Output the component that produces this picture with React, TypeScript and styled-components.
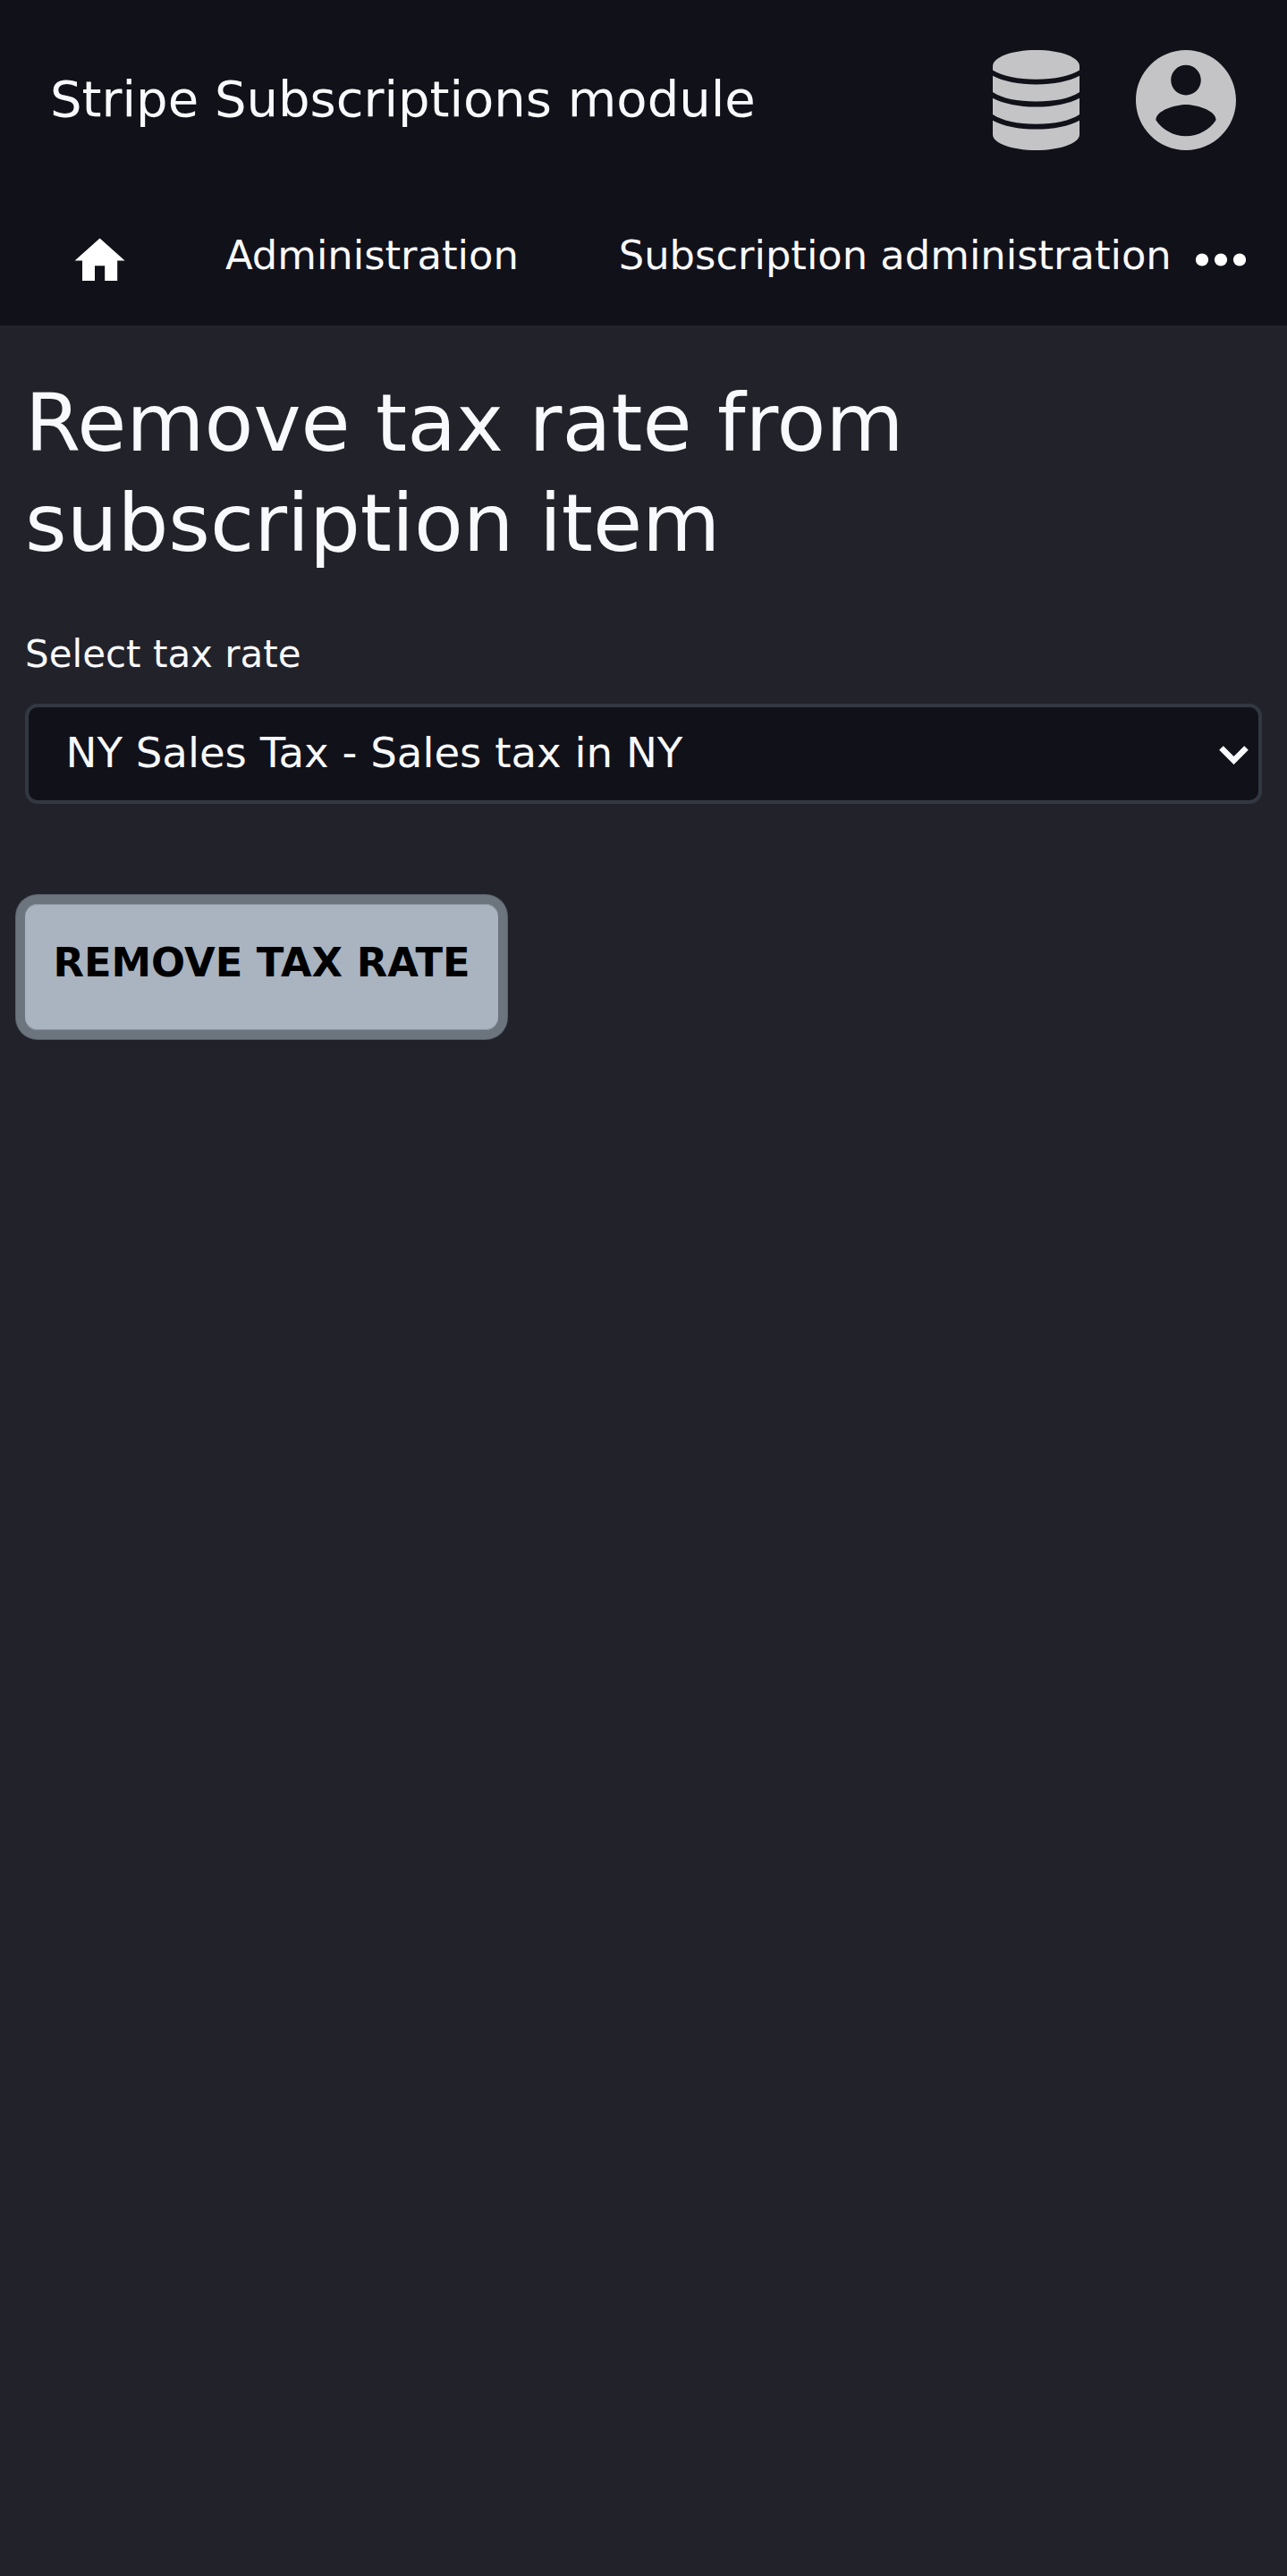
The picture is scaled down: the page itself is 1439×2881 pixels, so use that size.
import React from "react";
import styled, { createGlobalStyle } from "styled-components";

const GlobalStyle = createGlobalStyle`
  * { box-sizing: border-box; }
  html, body { margin: 0; background: #22222b; }
  body { font-family: "DejaVu Sans", sans-serif; color: #f8f9fc; }
`;

const Page = styled.div`
  min-height: 2881px;
  background: #22222b;
`;

const Header = styled.header`
  height: 364px;
  background: #11111a;
`;

const TitleBar = styled.div`
  display: flex;
  align-items: center;
  height: 224px;
  padding: 0 56.8px 0 56px;
`;

const Brand = styled.div`
  flex: 1;
  padding-bottom: 3px;
  font-size: 56px;
  line-height: 84px;
  white-space: nowrap;
`;

const Tools = styled.div`
  display: flex;
  gap: 63.2px;
  color: #c4c4c6;
  svg { display: block; fill: currentColor; }
`;

const Nav = styled.nav`
  display: flex;
  align-items: flex-start;
  height: 140px;
  padding: 28px 0 0 78.4px;
`;

const HomeLink = styled.a`
  display: block;
  margin: 6px 106.6px 0 0;
  width: 67px;
  svg { display: block; fill: #fff; }
`;

const NavLink = styled.a`
  margin-right: 112px;
  font-size: 44.8px;
  line-height: 67px;
  white-space: nowrap;
  &:last-of-type { margin-right: 27.5px; }
`;

const More = styled.button`
  display: block;
  margin: 31px 0 0;
  padding: 0;
  border: 0;
  background: none;
  svg { display: block; fill: #fff; }
`;

const Main = styled.main`
  padding: 53px 28px 0;
`;

const Heading = styled.h1`
  margin: 0 0 59px;
  max-width: 1100px;
  font-size: 89.6px;
  font-weight: 400;
  line-height: 112px;
`;

const Label = styled.label`
  display: block;
  margin-bottom: 24px;
  font-size: 42px;
  line-height: 63px;
`;

const SelectBox = styled.div`
  display: flex;
  align-items: center;
  justify-content: space-between;
  height: 112px;
  padding: 0 11px 2px 41.5px;
  border: 4px solid #323841;
  border-radius: 14px;
  background: #11111a;
  font-size: 46.67px;
  svg { display: block; margin-top: 5px; }
`;

const Submit = styled.button`
  display: block;
  margin: 112px 0 0;
  height: 141px;
  width: 529px;
  padding: 0 0 10px;
  border: 0;
  border-radius: 14px;
  background: #a9b4c0;
  box-shadow:
    inset 0 1px #8b949f,
    inset 0 -1px #8b949f,
    0 0 0 10px #6c747e,
    0 0 0 11px #5c636c;
  color: #000;
  font: 700 44.8px "DejaVu Sans", sans-serif;
  white-space: nowrap;
`;

const DatabaseIcon = () => (
  <svg width="97" height="112" viewBox="0 0 97 112">
    <path d="M0 18C0 8 21 0 48.500 0S97 8 97 18V22.500C87 29 69 32.700 48.500 32.700S10 29 0 22.500Z" />
    <path d="M0 28.700C12 35 29 38.400 48.500 38.400S85 35 97 28.700V47C87 54 69 57.500 48.500 57.500S10 54 0 47Z" />
    <path d="M0 53.700C12 60 29 63.500 48.500 63.500S85 60 97 53.700V72C87 79 69 82.700 48.500 82.700S10 79 0 72Z" />
    <path d="M0 78.700C12 85 29 88.600 48.500 88.600S85 85 97 78.700V94.500C97 104 76 112 48.500 112S0 104 0 94.500Z" />
  </svg>
);

const AccountIcon = () => (
  <svg width="112" height="112" viewBox="2 2 20 20">
    <path d="M12 2C6.480 2 2 6.480 2 12s4.480 10 10 10 10-4.480 10-10S17.520 2 12 2zm0 3c1.660 0 3 1.340 3 3s-1.340 3-3 3-3-1.340-3-3 1.340-3 3-3zm0 14.200c-2.500 0-4.710-1.280-6-3.220.030-1.990 4-3.080 6-3.080 1.990 0 5.970 1.090 6 3.080-1.290 1.940-3.500 3.220-6 3.220z" />
  </svg>
);

export default function App() {
  return (
    <Page>
      <GlobalStyle />
      <Header>
        <TitleBar>
          <Brand>Stripe Subscriptions module</Brand>
          <Tools>
            <DatabaseIcon />
            <AccountIcon />
          </Tools>
        </TitleBar>
        <Nav>
          <HomeLink>
            <svg width="67.2" height="67.2" viewBox="0 0 24 24">
              <path d="M10 20v-6h4v6h5v-8h3L12 3 2 12h3v8z" />
            </svg>
          </HomeLink>
          <NavLink>Administration</NavLink>
          <NavLink>Subscription administration</NavLink>
          <More aria-label="More">
            <svg width="56" height="15" viewBox="0 0 56 15">
              <circle cx="7" cy="7.500" r="7.100" />
              <circle cx="28" cy="7.500" r="7.100" />
              <circle cx="49" cy="7.500" r="7.100" />
            </svg>
          </More>
        </Nav>
      </Header>
      <Main>
        <Heading>Remove tax rate from subscription item</Heading>
        <Label>Select tax rate</Label>
        <SelectBox>
          NY Sales Tax - Sales tax in NY
          <svg width="33" height="21" viewBox="0 0 33 21">
            <path d="M2.500 2.500L16.500 16.500L30.500 2.500" fill="none" stroke="#f8f9fc" strokeWidth="6.500" />
          </svg>
        </SelectBox>
        <Submit>REMOVE TAX RATE</Submit>
      </Main>
    </Page>
  );
}
